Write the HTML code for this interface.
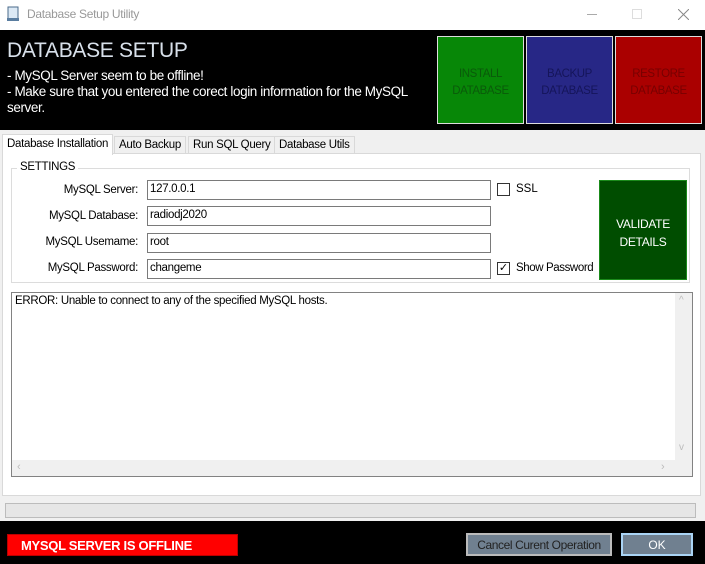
<!DOCTYPE html><html><head><style>
*{margin:0;padding:0;box-sizing:border-box}
body{width:705px;height:564px;position:relative;background:#f0f0f0;font-family:"Liberation Sans",sans-serif;font-size:12px;color:#000;overflow:hidden}
.a{position:absolute}
.inp{position:absolute;background:#fff;border:1px solid #7a7a7a;height:20px;left:147px;width:344px;padding:2px 2px;font-size:11.5px;letter-spacing:-.3px}
.lbl{position:absolute;right:567px;font-size:11.5px;letter-spacing:-.3px}
.big{position:absolute;top:36px;height:88px;width:87px;border:1px solid #ddd;text-align:center;padding-top:29px;font-size:11.5px;line-height:17px;letter-spacing:-.4px}
.tab{position:absolute;top:136px;height:18px;border:1px solid #d9d9d9;background:#f0f0f0;font-size:11.5px;padding:2px 4px;letter-spacing:-.3px}
</style></head><body>
<div class="a" style="left:0;top:0;width:705px;height:30px;background:#fff"></div>
<svg class="a" style="left:6px;top:6px" width="14" height="16"><rect x="2" y="1" width="10" height="12" fill="#dce9f5" stroke="#4a6a8a"/><rect x="1" y="12" width="12" height="3" fill="#5a7da0"/></svg>
<div class="a" style="left:27px;top:7px;color:#999;font-size:12px;letter-spacing:-.3px">Database Setup Utility</div>
<div class="a" style="left:587px;top:14px;width:10px;height:1px;background:#aaa"></div>
<div class="a" style="left:632px;top:9px;width:10px;height:10px;border:1px solid #ddd"></div>
<svg class="a" style="left:678px;top:9px" width="11" height="11"><path d="M0 0L11 11M11 0L0 11" stroke="#888" stroke-width="1"/></svg>
<div class="a" style="left:0;top:30px;width:705px;height:100px;background:#000"></div>
<div class="a" style="left:7px;top:39px;color:#d8e0ea;font-size:21px;letter-spacing:-.3px">DATABASE SETUP</div>
<div class="a" style="left:7px;top:68px;color:#fff;font-size:13.5px;line-height:16px;letter-spacing:-.4px;width:420px">- MySQL Server seem to be offline!<br>- Make sure that you entered the corect login information for the MySQL server.</div>
<div class="big" style="left:437px;background:#078707;color:#0a5a0a">INSTALL<br>DATABASE</div>
<div class="big" style="left:526px;background:#272786;color:#15155a">BACKUP<br>DATABASE</div>
<div class="big" style="left:615px;background:#aa0000;color:#700">RESTORE<br>DATABASE</div>
<div class="a" style="left:2px;top:153px;width:699px;height:343px;background:#fff;border:1px solid #d9d9d9"></div>
<div class="tab" style="left:2px;top:134px;height:21px;background:#fff;border-bottom:none;padding-top:3px">Database Installation</div>
<div class="tab" style="left:114px">Auto Backup</div>
<div class="tab" style="left:188px">Run SQL Query</div>
<div class="tab" style="left:274px">Database Utils</div>
<div class="a" style="left:11px;top:168px;width:679px;height:115px;border:1px solid #dcdcdc"></div>
<div class="a" style="left:17px;top:161px;background:#fff;padding:0 3px;font-size:11.5px;letter-spacing:-.3px">SETTINGS</div>
<div class="lbl" style="top:184px">MySQL Server:</div>
<div class="lbl" style="top:210px">MySQL Database:</div>
<div class="lbl" style="top:236px">MySQL Usemame:</div>
<div class="lbl" style="top:262px">MySQL Password:</div>
<div class="inp" style="top:180px">127.0.0.1</div>
<div class="inp" style="top:206px">radiodj2020</div>
<div class="inp" style="top:233px">root</div>
<div class="inp" style="top:259px">changeme</div>
<div class="a" style="left:497px;top:183px;width:13px;height:13px;border:1px solid #333"></div>
<div class="a" style="left:516px;top:183px;font-size:11.5px">SSL</div>
<div class="a" style="left:497px;top:262px;width:13px;height:13px;border:1px solid #333;font-size:11px;line-height:11px;text-align:center">✓</div>
<div class="a" style="left:516px;top:262px;font-size:11.5px;letter-spacing:-.4px">Show Password</div>
<div class="a" style="left:599px;top:180px;width:88px;height:100px;background:#004d00;border:1px solid #1a8a1a;color:#fff;text-align:center;padding-top:34px;font-size:12px;line-height:18px;letter-spacing:-.3px">VALIDATE<br>DETAILS</div>
<div class="a" style="left:11px;top:292px;width:682px;height:185px;border:1px solid #828282;background:#fff"></div>
<div class="a" style="left:15px;top:295px;font-size:11.5px;letter-spacing:-.3px">ERROR: Unable to connect to any of the specified MySQL hosts.</div>
<div class="a" style="left:675px;top:293px;width:17px;height:167px;background:#f0f0f0"></div>
<div class="a" style="left:12px;top:460px;width:680px;height:16px;background:#f0f0f0"></div>
<div class="a" style="left:679px;top:295px;color:#bbb;font-size:10px">^</div>
<div class="a" style="left:679px;top:442px;color:#bbb;font-size:10px">v</div>
<div class="a" style="left:17px;top:461px;color:#bbb;font-size:11px">‹</div>
<div class="a" style="left:661px;top:461px;color:#bbb;font-size:11px">›</div>
<div class="a" style="left:5px;top:503px;width:691px;height:15px;background:#e6e6e6;border:1px solid #bcbcbc"></div>
<div class="a" style="left:0;top:521px;width:705px;height:43px;background:#000"></div>
<div class="a" style="left:7px;top:534px;width:231px;height:22px;background:#f00;border:1px solid #b00;color:#fff;font-size:13px;font-weight:bold;padding:3px 0 0 13px;letter-spacing:-.3px">MYSQL SERVER IS OFFLINE</div>
<div class="a" style="left:466px;top:533px;width:146px;height:23px;background:#708090;border:2px solid #bbb;color:#222;font-size:12px;text-align:center;padding-top:3px;letter-spacing:-.4px">Cancel Curent Operation</div>
<div class="a" style="left:621px;top:533px;width:72px;height:23px;background:#708090;border:2px solid #aad4f5;color:#fff;font-size:12px;text-align:center;padding-top:3px">OK</div>
</body></html>
